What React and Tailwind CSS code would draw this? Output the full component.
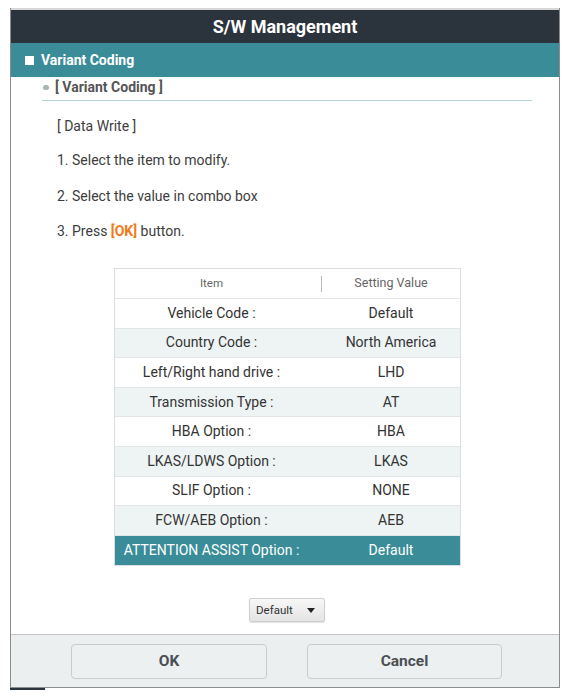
const rows = [
  { item: "Vehicle Code :", value: "Default" },
  { item: "Country Code :", value: "North America" },
  { item: "Left/Right hand drive :", value: "LHD" },
  { item: "Transmission Type :", value: "AT" },
  { item: "HBA Option :", value: "HBA" },
  { item: "LKAS/LDWS Option :", value: "LKAS" },
  { item: "SLIF Option :", value: "NONE" },
  { item: "FCW/AEB Option :", value: "AEB" },
  { item: "ATTENTION ASSIST Option :", value: "Default" },
];

const SELECTED = 8;

function CodingTable() {
  return (
    <div className="ml-[103px] mt-[28px] w-[347px] border border-[#dcdfe0] bg-white text-[14px] text-[#333]">
      <div className="flex h-[30px] items-center border-b border-[#e3e6e6] text-[11.5px] text-[#666]">
        <div className="relative flex h-full w-[207px] items-center justify-center pr-[14px]">
          Item
          <span className="absolute right-0 top-[7px] h-[16px] w-px bg-[#bbb]" />
        </div>
        <div className="flex h-full flex-1 items-center justify-center text-[12.5px]">Setting Value</div>
      </div>
      {rows.map((row, i) => {
        const selected = i === SELECTED;
        const shaded = i % 2 === 1;
        return (
          <div
            key={row.item}
            className={
              "flex h-[29.6px] items-center border-b last:border-b-0 " +
              (selected
                ? "border-[#3a8d98] bg-[#3a8d98] text-white"
                : shaded
                  ? "border-[#e3e6e6] bg-[#eef3f3]"
                  : "border-[#e3e6e6] bg-white")
            }
          >
            <div className="w-[207px] whitespace-nowrap pr-[14px] text-center">{row.item}</div>
            <div className="flex-1 text-center">{row.value}</div>
          </div>
        );
      })}
    </div>
  );
}

export default function App() {
  return (
    <div
      className="relative h-[697px] w-[569px] bg-white pl-[10px] pt-[8px]"
      style={{ fontFamily: "Roboto, 'Liberation Sans', sans-serif" }}
    >
      <div className="flex h-[680px] w-[550px] flex-col border-x border-b border-[#8c8c8c] bg-white">
        <div className="h-[2px] bg-[#d6d6d6]" />
        {/* title bar */}
        <div className="flex h-[33px] items-center justify-center bg-[#2b333c] text-[18px] font-bold text-white">
          S/W Management
        </div>
        <div className="flex h-[34px] items-center gap-[7px] bg-[#3a8d98] pl-[14px] text-[14px] font-bold text-white">
          <span className="h-[9px] w-[9px] bg-white" />
          Variant Coding
        </div>

        <div className="flex-1">
          <div className="mt-[1px] flex h-[18px] items-center pl-[32px] text-[14px] font-bold text-[#555]">
            <span className="mr-[6px] h-[5px] w-[6px] rounded-full bg-[#a9b4b6]" />[ Variant Coding ]
          </div>
          <div className="ml-[31px] mt-[4px] h-[1px] w-[490px] bg-[#b5d2d5]" />

          <div className="pl-[46px] text-[14px] leading-[18px] text-[#3d3d3d]">
            <div className="mt-[16px]">[ Data Write ]</div>
            <div className="mt-[16px]">1. Select the item to modify.</div>
            <div className="mt-[18px]">2. Select the value in combo box</div>
            <div className="mt-[17px]">
              3. Press <span className="font-bold text-[#f07a1a]">[OK]</span> button.
            </div>
          </div>

          <CodingTable />

          <button
            type="button"
            className="ml-[238px] mt-[32px] flex h-[24px] w-[76px] items-center justify-between rounded-[2px] border border-[#cfcfcf] bg-gradient-to-b from-[#f7f7f7] to-[#e4e4e4] pl-[6px] pr-[9px] text-[11.5px] text-[#333] shadow-[0_1px_1px_rgba(0,0,0,0.12)]"
          >
            Default
            <span className="h-0 w-0 border-x-[4px] border-t-[5px] border-x-transparent border-t-[#222]" />
          </button>
        </div>

        {/* footer buttons */}
        <div className="flex h-[53px] gap-[40px] border-t border-[#c4c4c4] bg-[#ecefef] pl-[60px] pt-[9px]">
          <button
            type="button"
            className="h-[35px] w-[196px] rounded-[4px] border border-[#c9cccc] bg-[#edf0f0] text-[15.5px] font-bold text-[#4a4f55]"
          >
            OK
          </button>
          <button
            type="button"
            className="h-[35px] w-[195px] rounded-[4px] border border-[#c9cccc] bg-[#edf0f0] text-[15.5px] font-bold text-[#4a4f55]"
          >
            Cancel
          </button>
        </div>
      </div>
      <div className="ml-0 h-[2px] w-[35px] bg-[#2b333c]" />
    </div>
  );
}
